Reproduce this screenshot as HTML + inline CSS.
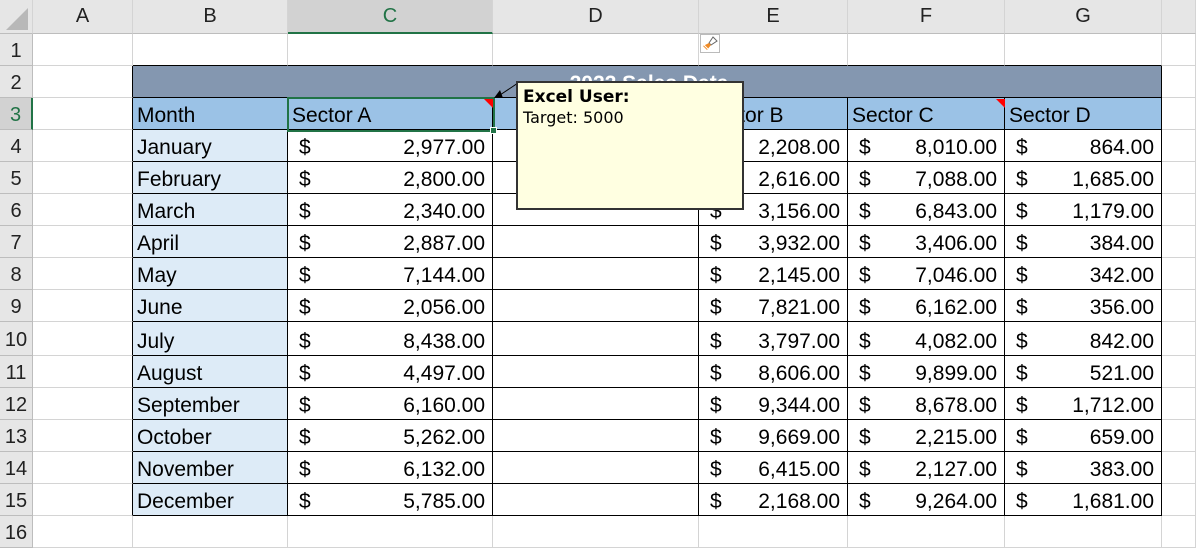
<!DOCTYPE html>
<html><head><meta charset="utf-8">
<style>
*{box-sizing:border-box;margin:0;padding:0}
body{width:1196px;height:541px;overflow:hidden;background:#fff;font-family:"Liberation Sans",sans-serif;position:relative}
table{border-collapse:separate;border-spacing:0;table-layout:fixed;position:absolute;left:0;top:0}
td{border-right:1px solid #d4d4d4;border-bottom:1px solid #d4d4d4;font-size:21px;color:#000;white-space:nowrap;overflow:hidden;padding:0 0 0 4px;vertical-align:bottom;line-height:27px}
td.h{background:#e6e6e6;text-align:center;padding:0;color:#222;border-color:#bdbdbd;vertical-align:middle;font-size:20px;line-height:normal;padding-top:3px}
td.ch{background:#e6e6e6;text-align:center;padding:0;color:#222;border-right:1px solid #d4d4d4;border-bottom:1px solid #bdbdbd;vertical-align:middle;font-size:20px;line-height:normal}
td.sc{background:#d2d2d2;color:#217346;border-bottom:2px solid #217346}
td.sr{background:#d2d2d2;color:#217346;border-right:2px solid #217346}
td.k{border-right:1px solid #000;border-bottom:1px solid #000}
td.kb{border-bottom:1px solid #000}
td.kr{border-right:1px solid #000}
td.mo{background:#ddebf7}
td.hd{background:#9bc2e6}
td.t{background:#8497b0;color:#fff;font-weight:bold;text-align:center;vertical-align:bottom}
td.m{text-align:right;padding-right:7px}
td.m span{float:left;padding-left:7px}
tr{height:32px}
</style></head><body>
<table>
<colgroup><col style="width:33px"><col style="width:100px"><col style="width:155px"><col style="width:205px"><col style="width:206px"><col style="width:149px"><col style="width:157px"><col style="width:157px"><col style="width:34px"></colgroup>
<tr style="height:34px"><td class="ch" style="background:#e6e6e6"><svg width="30" height="30" style="display:block;margin-left:2px"><polygon points="26,6 26,28 4,28" fill="#b8b8b8"/></svg></td><td class="ch">A</td><td class="ch">B</td><td class="ch sc">C</td><td class="ch">D</td><td class="ch">E</td><td class="ch">F</td><td class="ch">G</td><td class="ch"></td></tr>
<tr style="height:32px"><td class="h">1</td><td></td><td class="kb"></td><td class="kb"></td><td class="kb"></td><td class="kb"></td><td class="kb"></td><td class="kb"></td><td></td></tr>
<tr><td class="h">2</td><td class="kr"></td><td class="k t" colspan="6">2022 Sales Data</td><td></td></tr>
<tr><td class="h sr">3</td><td class="kr"></td><td class="k hd">Month</td><td class="k hd">Sector A</td><td class="k hd"></td><td class="k hd">Sector B</td><td class="k hd">Sector C</td><td class="k hd">Sector D</td><td></td></tr>
<tr><td class="h">4</td><td class="kr"></td><td class="k mo">January</td><td class="k m"><span>$</span>2,977.00</td><td class="k"></td><td class="k m"><span>$</span>2,208.00</td><td class="k m"><span>$</span>8,010.00</td><td class="k m"><span>$</span>864.00</td><td></td></tr>
<tr><td class="h">5</td><td class="kr"></td><td class="k mo">February</td><td class="k m"><span>$</span>2,800.00</td><td class="k"></td><td class="k m"><span>$</span>2,616.00</td><td class="k m"><span>$</span>7,088.00</td><td class="k m"><span>$</span>1,685.00</td><td></td></tr>
<tr><td class="h">6</td><td class="kr"></td><td class="k mo">March</td><td class="k m"><span>$</span>2,340.00</td><td class="k"></td><td class="k m"><span>$</span>3,156.00</td><td class="k m"><span>$</span>6,843.00</td><td class="k m"><span>$</span>1,179.00</td><td></td></tr>
<tr><td class="h">7</td><td class="kr"></td><td class="k mo">April</td><td class="k m"><span>$</span>2,887.00</td><td class="k"></td><td class="k m"><span>$</span>3,932.00</td><td class="k m"><span>$</span>3,406.00</td><td class="k m"><span>$</span>384.00</td><td></td></tr>
<tr><td class="h">8</td><td class="kr"></td><td class="k mo">May</td><td class="k m"><span>$</span>7,144.00</td><td class="k"></td><td class="k m"><span>$</span>2,145.00</td><td class="k m"><span>$</span>7,046.00</td><td class="k m"><span>$</span>342.00</td><td></td></tr>
<tr><td class="h">9</td><td class="kr"></td><td class="k mo">June</td><td class="k m"><span>$</span>2,056.00</td><td class="k"></td><td class="k m"><span>$</span>7,821.00</td><td class="k m"><span>$</span>6,162.00</td><td class="k m"><span>$</span>356.00</td><td></td></tr>
<tr style="height:34px"><td class="h">10</td><td class="kr"></td><td class="k mo">July</td><td class="k m"><span>$</span>8,438.00</td><td class="k"></td><td class="k m"><span>$</span>3,797.00</td><td class="k m"><span>$</span>4,082.00</td><td class="k m"><span>$</span>842.00</td><td></td></tr>
<tr><td class="h">11</td><td class="kr"></td><td class="k mo">August</td><td class="k m"><span>$</span>4,497.00</td><td class="k"></td><td class="k m"><span>$</span>8,606.00</td><td class="k m"><span>$</span>9,899.00</td><td class="k m"><span>$</span>521.00</td><td></td></tr>
<tr><td class="h">12</td><td class="kr"></td><td class="k mo">September</td><td class="k m"><span>$</span>6,160.00</td><td class="k"></td><td class="k m"><span>$</span>9,344.00</td><td class="k m"><span>$</span>8,678.00</td><td class="k m"><span>$</span>1,712.00</td><td></td></tr>
<tr><td class="h">13</td><td class="kr"></td><td class="k mo">October</td><td class="k m"><span>$</span>5,262.00</td><td class="k"></td><td class="k m"><span>$</span>9,669.00</td><td class="k m"><span>$</span>2,215.00</td><td class="k m"><span>$</span>659.00</td><td></td></tr>
<tr><td class="h">14</td><td class="kr"></td><td class="k mo">November</td><td class="k m"><span>$</span>6,132.00</td><td class="k"></td><td class="k m"><span>$</span>6,415.00</td><td class="k m"><span>$</span>2,127.00</td><td class="k m"><span>$</span>383.00</td><td></td></tr>
<tr><td class="h">15</td><td class="kr"></td><td class="k mo">December</td><td class="k m"><span>$</span>5,785.00</td><td class="k"></td><td class="k m"><span>$</span>2,168.00</td><td class="k m"><span>$</span>9,264.00</td><td class="k m"><span>$</span>1,681.00</td><td></td></tr>
<tr style="height:32px"><td class="h">16</td><td></td><td></td><td></td><td></td><td></td><td></td><td></td><td></td></tr>
</table>
<div style="position:absolute;left:287px;top:97px;width:208px;height:35px;border:2px solid #217346"></div>
<div style="position:absolute;left:490px;top:127px;width:7px;height:7px;background:#217346;border:1px solid #fff"></div>
<svg style="position:absolute;left:0;top:0" width="1196" height="541">
<polygon points="484,99 493,99 493,108" fill="#f00"/>
<polygon points="996,99 1005,99 1005,108" fill="#f00"/>
<line x1="500" y1="95" x2="518" y2="83" stroke="#000" stroke-width="1"/>
<polygon points="494,98 503,98 500,90" fill="#000"/>
</svg>
<div style="position:absolute;left:700px;top:34px;width:20px;height:19px;border:1px solid #bbb;background:#fff">
<svg width="18" height="17"><path d="M12 2 L16 6 L10 10 L8 8 Z" fill="#fff" stroke="#666" stroke-width="1"/><path d="M8 8 L10 10 L6 15 L2 11 Z" fill="#f08a24"/><path d="M3 10 L7 14" stroke="#fff" stroke-width="1"/></svg>
</div>
<div style="position:absolute;left:516px;top:81px;width:228px;height:129px;background:#ffffe1;border:2px solid #333;padding:4px 0 0 5px;font-family:'DejaVu Sans','Liberation Sans',sans-serif">
<div style="font-weight:bold;font-size:17px;line-height:21px">Excel User:</div>
<div style="font-size:16px;line-height:20px">Target: 5000</div>
</div>
</body></html>
